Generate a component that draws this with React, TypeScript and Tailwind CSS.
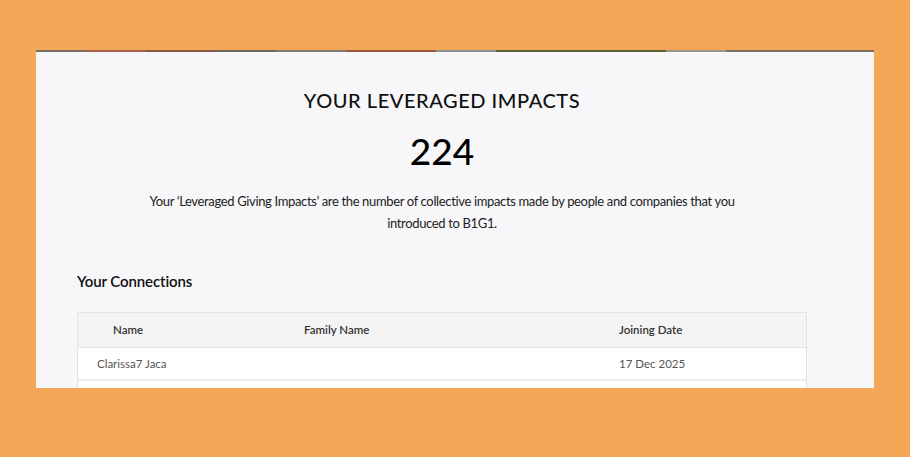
import React from "react";

const strip = [
  "w-[50px] bg-[#7a6e64]",
  "w-[60px] bg-[#a8604c]",
  "w-[70px] bg-[#8a5a48]",
  "w-[60px] bg-[#6e665a]",
  "w-[70px] bg-[#7e7a70]",
  "w-[90px] bg-[#a0583c]",
  "w-[60px] bg-[#8a9496]",
  "w-[170px] bg-[#5a6038]",
  "w-[60px] bg-[#9a948a]",
  "flex-1 bg-[#7a7060]",
];

export default function App() {
  return (
    <div className="w-[910px] h-[457px] bg-[#F4A757] pt-[50px] pl-[36px] overflow-hidden" style={{ fontFamily: "Lato, 'Open Sans', sans-serif" }}>
      <div className="w-[838px] h-[338px] bg-[#F7F7F9] flex flex-col overflow-hidden">
        <div className="h-[2px] w-full flex shrink-0">
          {strip.map((c, i) => (
            <div key={i} className={c} />
          ))}
        </div>
        <div className="pl-[41px] w-[771px] flex flex-col items-center">
          <h1 className="mt-[34px] text-[20px] leading-[28px] text-[#111] tracking-[0.55px] font-medium">YOUR LEVERAGED IMPACTS</h1>
          <div className="mt-[15px] text-[37px] leading-[44px] text-black font-medium">224</div>
          <p className="mt-[17px] w-[640px] text-center text-[13px] leading-[22px] text-[#222] tracking-[-0.35px]">
            Your ‘Leveraged Giving Impacts’ are the number of collective impacts made by people and companies that you introduced to B1G1.
          </p>
          <div className="w-[730px] mt-[36px]">
            <h2 className="text-[15px] leading-[22px] font-semibold text-[#111] tracking-[-0.1px]">Your Connections</h2>
            <div className="mt-[20px] border border-[#E3E3E6] bg-white">
              <div className="flex h-[35px] items-center bg-[#F4F4F5] border-b border-[#E3E3E6] text-[11.5px] font-semibold text-[#333]">
                <div className="w-[226px] pl-[35px]">Name</div>
                <div className="w-[315px]">Family Name</div>
                <div>Joining Date</div>
              </div>
              <div className="flex h-[33px] items-center border-b-2 border-[#EDEDEF] text-[11.5px] text-[#555]">
                <div className="w-[226px] pl-[19px]">Clarissa7 Jaca</div>
                <div className="w-[315px]"></div>
                <div>17 Dec 2025</div>
              </div>
              <div className="h-[33px]" />
            </div>
          </div>
        </div>
      </div>
    </div>
  );
}
